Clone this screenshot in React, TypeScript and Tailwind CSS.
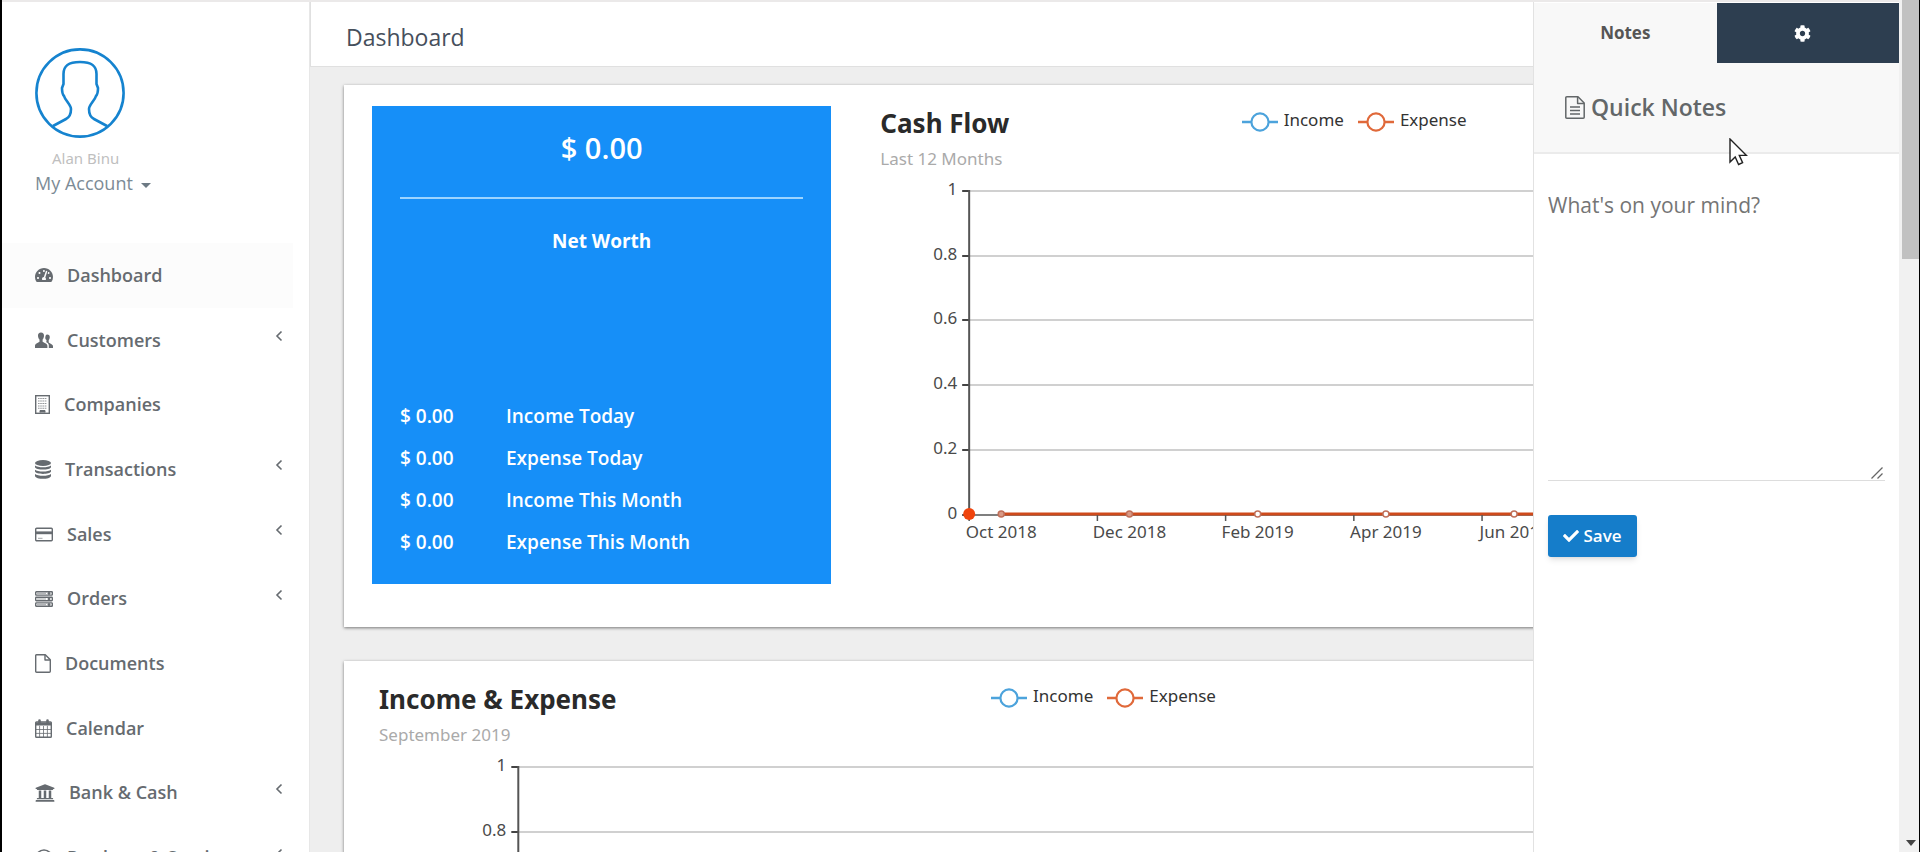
import React from "react";
import { FaCheck, FaCog, FaTachometerAlt, FaUniversity } from "react-icons/fa";

type NavItem = { label: string; icon: React.ReactNode; expandable?: boolean; active?: boolean };

function UsersIcon() {
  return (
    <svg width="18" height="17" viewBox="0 0 18 17" fill="currentColor" aria-hidden="true">
      <path d="M6 0.5C8 0.5 9.2 1.8 9 4C8.9 5.6 8.3 6.8 7.6 7.6V9.8L11.2 11.8C12 12.3 12.4 12.9 12.4 14V16H0V14C0 12.9 0.3 12.3 1.1 11.8L4.5 9.8V7.6C3.7 6.8 3.1 5.6 3 4C2.8 1.8 4 0.5 6 0.5Z" />
      <path d="M12.2 2.4C14 2.4 14.9 3.5 14.8 5.2C14.7 6.6 14.2 7.5 13.7 8.1V10.6L16.9 12.6C17.6 13.1 18 13.6 18 14.5V16H13.8V13.6C13.8 12.2 13.3 11.4 12.3 10.7L11 9.9L11.5 9.4V8.1C10.5 7.3 10.2 6.6 10.3 5.2C10.5 4.4 10.6 2.4 12.2 2.4Z" />
    </svg>
  );
}

function BuildingIcon() {
  return (
    <svg width="15" height="19" viewBox="0 0 15 19" fill="none" stroke="currentColor" aria-hidden="true">
      <rect x="0.7" y="0.7" width="13.6" height="17.6" strokeWidth="1.4" />
      <path d="M3 3.5H12M3 6H12M3 8.5H12M3 11H12M3 13.300H12" strokeDasharray="1.6 0.6" strokeWidth="1.1" opacity="0.7" />
      <path d="M5 17.5V15.500H10V17.5" fill="currentColor" />
    </svg>
  );
}

function DatabaseIcon() {
  return (
    <svg width="16" height="19" viewBox="0 0 16 19" fill="currentColor" aria-hidden="true">
      <ellipse cx="8" cy="3" rx="8" ry="3" />
      <path d="M0 5.4C2.5 7.8 13.5 7.8 16 5.4V7.2C15 10.4 1 10.4 0 7.2Z" />
      <path d="M0 9.7C2.5 12.1 13.5 12.1 16 9.7V11.5C15 14.7 1 14.7 0 11.5Z" />
      <path d="M0 14C2.5 16.4 13.5 16.4 16 14V15.900C15 19.8 1 19.8 0 15.900Z" />
    </svg>
  );
}

function CardIcon() {
  return (
    <svg width="18" height="15" viewBox="0 0 18 15" fill="none" stroke="currentColor" aria-hidden="true">
      <rect x="0.7" y="1.2" width="16.6" height="12.6" rx="1" strokeWidth="1.4" />
      <path d="M1 5.8H17" strokeWidth="2.8" />
      <path d="M3 11.3H7.5" strokeWidth="1" opacity="0.6" />
    </svg>
  );
}

function ServerIcon() {
  return (
    <svg width="18" height="16" viewBox="0 0 18 16" fill="none" stroke="currentColor" aria-hidden="true">
      {[2.4, 8, 13.6].map((y) => (
        <g key={y}>
          <rect x="0.7" y={y - 1.7} width="16.6" height="3.4" rx="0.6" strokeWidth="1.4" />
          <path d={`M2 ${y}H11`} strokeWidth="1.2" opacity="0.5" />
          <circle cx="14" cy={y} r="1" fill="currentColor" />
        </g>
      ))}
    </svg>
  );
}

function FileIcon() {
  return (
    <svg width="16" height="19" viewBox="0 0 16 19" fill="none" stroke="currentColor" strokeWidth="1.4" strokeLinejoin="round" aria-hidden="true">
      <path d="M1.500 0.7H10.300L15.300 5.700V17.300Q15.300 18.300 14.300 18.300H1.700Q0.7 18.300 0.7 17.300V1.700Q0.7 0.7 1.500 0.7Z" />
      <path d="M10 1V6H15" />
    </svg>
  );
}

function NoteIcon() {
  return (
    <svg width="20" height="23" viewBox="0 0 20 23" fill="none" stroke="currentColor" strokeWidth="1.5" strokeLinejoin="round" aria-hidden="true">
      <path d="M1.800 0.8H13L19.200 7V21.200Q19.200 22.200 18.200 22.200H1.800Q0.8 22.200 0.8 21.200V1.800Q0.8 0.8 1.800 0.8Z" />
      <path d="M12.600 1V7.400H19M5 11H15M5 14.500H15M5 18H15" />
    </svg>
  );
}

function CalendarIcon() {
  return (
    <svg width="17" height="19" viewBox="0 0 17 19" fill="none" stroke="currentColor" aria-hidden="true">
      <rect x="0.7" y="3" width="15.6" height="15.3" rx="0.8" strokeWidth="1.4" />
      <path d="M0.7 5H16.3" strokeWidth="3" />
      <path d="M4.5 1.500V5M12.5 1.500V5" strokeWidth="2.6" strokeLinecap="round" />
      <path d="M1 10.5H16M1 14.4H16M4.6 7V18M8.5 7V18M12.4 7V18" strokeWidth="1" opacity="0.8" />
    </svg>
  );
}

function CircleIcon() {
  return (
    <svg width="18" height="18" viewBox="0 0 18 18" fill="none" stroke="currentColor" aria-hidden="true">
      <circle cx="9" cy="9" r="8" strokeWidth="1.6" />
    </svg>
  );
}

const NAV: NavItem[] = [
  { label: "Dashboard", icon: <FaTachometerAlt size={18} />, active: true },
  { label: "Customers", icon: <UsersIcon />, expandable: true },
  { label: "Companies", icon: <BuildingIcon /> },
  { label: "Transactions", icon: <DatabaseIcon />, expandable: true },
  { label: "Sales", icon: <CardIcon />, expandable: true },
  { label: "Orders", icon: <ServerIcon />, expandable: true },
  { label: "Documents", icon: <FileIcon /> },
  { label: "Calendar", icon: <CalendarIcon /> },
  { label: "Bank & Cash", icon: <FaUniversity size={20} />, expandable: true },
  { label: "Products & Services", icon: <CircleIcon />, expandable: true },
];

function Sidebar() {
  return (
    <aside className="w-[308px] shrink-0 border-r border-[#e7e7e7] bg-white">
      <div className="h-[241px] pt-[46px] pl-[33px]">
        <svg width="90" height="90" viewBox="0 0 90 90" fill="none" stroke="#1583cf" strokeWidth="2.6" role="img" aria-label="Profile">
          <circle cx="45" cy="45" r="43.6" />
          <path d="M18 78L31 71C35 69 36 66 36 61C36 57 30 52 29 48C28 47 27 44 27 40L28.500 36V26C28.500 18 33 14 45 14C57 14 61.500 18 61.500 26V36L63 40C63 44 62 47 61 48C60 52 54 57 54 61C54 66 55 69 59 71L72 78" />
        </svg>
        <p className="mt-2 pl-[17px] font-['Noto_Sans',sans-serif] text-[15px] leading-6 text-[#bfbfbf]">Alan Binu</p>
        <button type="button" className="flex h-[26px] items-center gap-2 text-[18px] leading-[26px] text-[#7c8b96]">
          My Account
          <span className="mt-1 border-x-[5px] border-t-[5px] border-x-transparent border-t-[#6d7a84]" />
        </button>
      </div>
      <nav aria-label="Main">
        <ul className="grid h-[647px] auto-rows-fr">
          {NAV.map((item) => (
            <li key={item.label} className="pr-4">
              <a
                href="#"
                className={`flex h-full items-center gap-[14px] pr-[10px] pl-[33px] text-[18px] font-semibold text-[#666b70] ${item.active ? "bg-[#fcfcfc]" : ""}`}
              >
                <span className="shrink-0">{item.icon}</span>
                <span className="flex-1 whitespace-nowrap">{item.label}</span>
                {item.expandable && (
                  <svg className="mb-2" width="8" height="12" viewBox="0 0 8 12" fill="none" stroke="currentColor" strokeWidth="1.6" aria-hidden="true">
                    <path d="M6.500 1.500L2 6L6.500 10.500" />
                  </svg>
                )}
              </a>
            </li>
          ))}
        </ul>
      </nav>
    </aside>
  );
}

function LegendEntry({ label, color }: { label: string; color: string }) {
  return (
    <li className="flex items-center gap-[6px]">
      <svg className="mt-1" width="36" height="22" viewBox="0 0 36 22" aria-hidden="true">
        <path d="M0 11H36" stroke={color} strokeWidth="2.4" />
        <circle cx="18" cy="11" r="8.600" fill="#fff" stroke={color} strokeWidth="2.200" />
      </svg>
      {label}
    </li>
  );
}

const LEVELS = ["1", "0.8", "0.6", "0.4", "0.2", "0"];
const STEP = 64.7;

function Chart({ title, subtitle, months = [] }: { title: string; subtitle: string; months?: string[] }) {
  return (
    <section className="relative font-['Noto_Sans',sans-serif]">
      <h2 className="pl-[7px] text-[26px] leading-[34px] font-bold text-[#2a2a2a]">{title}</h2>
      <p className="mt-[5px] pl-[7px] text-[17px] leading-7 text-[#aaa]">{subtitle}</p>
      <ul className="absolute inset-x-0 top-px flex justify-center gap-[14px] text-[17px] leading-6 text-[#333]">
        <LegendEntry label="Income" color="#4ca3dc" />
        <LegendEntry label="Expense" color="#e0693a" />
      </ul>
      <svg className="block h-[390px] w-full overflow-hidden" role="img" aria-label={title}>
        <svg x="10%" y="18" width="80%" height="360" overflow="visible">
          {LEVELS.map((label, i) => (
            <g key={label} transform={`translate(0 ${Math.round(i * STEP)})`}>
              {i < 5 && <line x1="0" x2="100%" y1="0" y2="0" stroke="#d0d0d0" strokeWidth="2" />}
              <line x1="-7" x2="0" y1="0" y2="0" stroke="#444" strokeWidth="2" />
              <text x="-12" y="4" textAnchor="end" fontSize="17" fill="#4a4a4a">
                {label}
              </text>
            </g>
          ))}
          <line x1="0" x2="0" y1="-1" y2="324" stroke="#555" strokeWidth="2" />
          {months.length > 0 && (
            <g>
              <line x1="0" x2="100%" y1="324" y2="324" stroke="#555" strokeWidth="1.5" />
              <line x1="4.167%" x2="95.800%" y1="323" y2="323" stroke="#cf4a1b" strokeWidth="3" />
              {months.map((month, i) => (
                <g key={month}>
                  <line x1={`${(i * 100) / 6}%`} x2={`${(i * 100) / 6}%`} y1="324" y2="330" stroke="#555" strokeWidth="1.5" />
                  <circle cx={`${(i * 100) / 6 + 100 / 24}%`} cy="323" r="3" fill={i < 2 ? "#d99a86" : "#fff"} stroke="#c0705a" strokeWidth="1.5" />
                  <text x={`${(i * 100) / 6 + 100 / 24}%`} y="347" textAnchor="middle" fontSize="17" fill="#4a4a4a">
                    {month}
                  </text>
                </g>
              ))}
              <circle cx="0" cy="323" r="6" fill="#f0440d" />
            </g>
          )}
        </svg>
      </svg>
    </section>
  );
}

const TOTALS = ["Income Today", "Expense Today", "Income This Month", "Expense This Month"];

function NetWorth() {
  return (
    <section className="flex h-[478px] flex-col bg-[#168ff8] px-7 pt-6 pb-[21px] text-white">
      <p className="text-center text-[29px] leading-9 font-semibold">$ 0.00</p>
      <hr className="mt-[31px] border-t-2 border-[#9cd4ff]" />
      <h2 className="mt-7 text-center text-[19px] leading-7 font-bold">Net Worth</h2>
      <table className="mt-auto w-full text-left text-[19px] leading-[42px]">
        <tbody>
          {TOTALS.map((label) => (
            <tr key={label}>
              <td className="w-[106px] font-semibold">$ 0.00</td>
              <th scope="row" className="font-semibold">{label}</th>
            </tr>
          ))}
        </tbody>
      </table>
    </section>
  );
}

function NotesDrawer() {
  return (
    <aside className="absolute inset-y-0 right-0 w-[366px] border-l border-[#e2e2e2] bg-white pt-px">
      <div className="border-b-2 border-[#ebebeb] bg-[#f8f8f8]">
        <div role="tablist" className="grid h-[60px] grid-cols-2">
          <button type="button" role="tab" aria-selected="true" className="text-[17px] font-bold text-[#555]">
            Notes
          </button>
          <button type="button" role="tab" aria-selected="false" aria-label="Settings" className="flex items-center justify-center bg-[#2d3e50] pr-[10px] text-white">
            <FaCog size={17} />
          </button>
        </div>
        <h2 className="flex h-[89px] items-center gap-[6px] pl-[31px] text-[23px] font-semibold text-[#636769]">
          <NoteIcon />
          Quick Notes
        </h2>
      </div>
      <form className="px-[14px] pt-[27px]">
        <div className="relative">
          <textarea
            aria-label="Quick note"
            placeholder="What's on your mind?"
            className="block h-[300px] w-full resize-none border-b border-[#ddd] py-2 text-[21px] leading-8 text-[#555] outline-none placeholder:text-[#757575]"
          />
          <svg className="pointer-events-none absolute right-[2px] bottom-[2px]" width="12" height="12" viewBox="0 0 12 12" stroke="#666" strokeWidth="1.3" aria-hidden="true">
            <path d="M0.500 11.500L11.500 0.500M6.500 11.500L11.500 6.500" />
          </svg>
        </div>
        <button type="button" className="mt-[34px] flex h-[42px] w-[89px] items-center justify-center gap-1 rounded-[3px] bg-[#157dca] text-[17px] font-semibold text-white shadow-md">
          <FaCheck size={16} />
          Save
        </button>
      </form>
    </aside>
  );
}

export default function App() {
  return (
    <div className="flex h-screen overflow-hidden border-r border-l-2 border-black bg-[#eee] font-['Open_Sans',sans-serif]">
      <div className="relative flex min-w-0 flex-1 border-t-2 border-[#ebe9e9]">
        <Sidebar />
        <main className="min-w-0 flex-1">
          <header className="border-b border-l border-[#e0e0e0] bg-white pt-[6px] pl-[35px]">
            <h1 className="text-[23px] leading-[58px] text-[#464f5c]">Dashboard</h1>
          </header>
          <div className="flex flex-col gap-[34px] pt-[18px] pr-9 pl-[34px]">
            <div className="grid h-[542px] grid-cols-[459fr_961fr] items-start gap-[42px] bg-white px-7 pt-[21px] shadow-[0_1px_3px_rgba(0,0,0,0.5)]">
              <NetWorth />
              <Chart
                title="Cash Flow"
                subtitle="Last 12 Months"
                months={["Oct 2018", "Dec 2018", "Feb 2019", "Apr 2019", "Jun 2019"]}
              />
            </div>
            <div className="bg-white px-7 pt-[21px] shadow-[0_1px_3px_rgba(0,0,0,0.5)]">
              <Chart title="Income & Expense" subtitle="September 2019" />
            </div>
          </div>
        </main>
        <NotesDrawer />
      </div>
      <div className="flex w-5 shrink-0 flex-col items-center justify-between bg-[#f1f1f1] pl-[3px]" aria-hidden="true">
        <div className="h-[259px] w-full bg-[#c1c1c1]" />
        <div className="mb-[6px] border-x-[5px] border-t-[6px] border-x-transparent border-t-[#444]" />
      </div>
      <svg className="pointer-events-none absolute top-[138px] right-[172px]" width="19" height="28" viewBox="0 0 19 28" aria-hidden="true">
        <path d="M1 1V24L6.200 19L9.600 26.500L13.600 24.700L10.300 17.400H17.500Z" fill="#fff" stroke="#222" strokeWidth="1.400" />
      </svg>
    </div>
  );
}
